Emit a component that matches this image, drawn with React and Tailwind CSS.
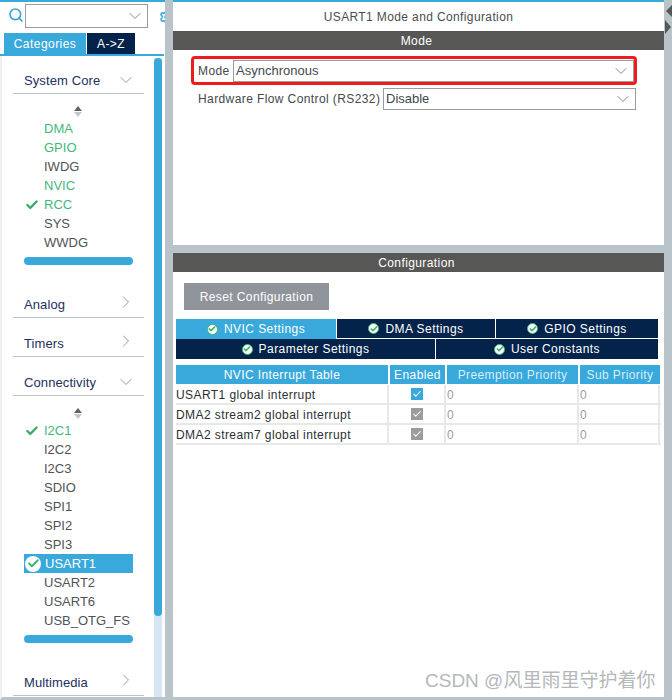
import { ChevronDown, ChevronRight, Check, Search, Settings } from "lucide-react";

const font = { fontFamily: '"Liberation Sans", Arial, sans-serif' };

const Chevron = ({ open }) =>
  open ? (
    <ChevronDown className="w-[20px] h-[20px] -mt-[1px] text-[#7d8589] shrink-0" strokeWidth={1} />
  ) : (
    <ChevronRight className="w-[20px] h-[20px] -mt-[3px] text-[#7d8589] shrink-0" strokeWidth={1} />
  );

const Section = ({ title, open, className }) => (
  <div className={`mx-[13px] w-[131px] h-[23px] border-b border-[#b9c4ca] flex items-start justify-between pr-[8px] ${className}`}>
    <span className="pl-[11px] text-[13px] leading-[20px] tracking-[0.1px] text-[#232f5e]">{title}</span>
    <Chevron open={open} />
  </div>
);

const SortArrows = ({ className }) => (
  <div className={`w-[8px] ml-[74px] flex flex-col items-center gap-[1px] ${className}`}>
    <div className="w-0 h-0 border-x-[4px] border-x-transparent border-b-[5px] border-b-[#5c6468]" />
    <div className="w-0 h-0 border-x-[4px] border-x-transparent border-t-[5px] border-t-[#c3c7c9]" />
  </div>
);

const Peripheral = ({ name, active, checked, selected }) => {
  if (selected) {
    return (
      <div className="ml-[24px] w-[109px] h-[19px] bg-[#39a9dc] flex items-center pl-[1px]">
        <span className="w-[16px] h-[16px] rounded-full bg-white flex items-center justify-center shrink-0">
          <Check className="w-[13px] h-[13px] text-[#3cb371]" strokeWidth={3.5} />
        </span>
        <span className="ml-[4px] text-[13px] leading-[19px] text-white">{name}</span>
      </div>
    );
  }
  return (
    <div className="h-[19px] flex items-center pl-[25px]">
      <span className="w-[19px] flex items-center">
        {checked && <Check className="w-[14px] h-[14px] text-[#3cab6b]" strokeWidth={4} />}
      </span>
      <span className={`text-[13px] leading-[19px] ${active ? "text-[#3fb87c]" : "text-[#4f5357]"}`}>{name}</span>
    </div>
  );
};

const HBar = ({ className }) => <div className={`ml-[24px] w-[109px] h-[8px] rounded-full bg-[#39a9dc] ${className}`} />;

const SubTab = ({ label, active, className }) => (
  <div className={`h-[20px] flex items-center justify-center gap-[6px] text-[12px] tracking-[0.45px] text-white ${active ? "bg-[#39a9dc]" : "bg-[#03234b]"} ${className}`}>
    <span className="w-[11px] h-[11px] rounded-full bg-white border-[1px] border-[#3cb371] flex items-center justify-center">
      <Check className="w-[8px] h-[8px] text-[#3cb371]" strokeWidth={5} />
    </span>
    <span className="leading-[20px]">{label}</span>
  </div>
);

const Row = ({ name, on }) => (
  <div className="flex h-[20px] border-b-2 border-[#e6e8ea] text-[12px] leading-[20px]">
    <div className="w-[213px] border-r-2 border-[#e6e8ea] tracking-[0.42px] text-[#2c2f33] whitespace-nowrap">{name}</div>
    <div className="w-[57px] border-r-2 border-[#e6e8ea] flex items-center justify-center">
      <span className={`w-[12px] h-[12px] flex items-center justify-center ${on ? "bg-[#39a9dc]" : "bg-[#9a9da0]"}`}>
        <Check className="w-[10px] h-[10px] text-white" strokeWidth={2.5} />
      </span>
    </div>
    <div className="w-[133px] border-r-2 border-[#e6e8ea] pl-[1px] text-[#9a9da0]">0</div>
    <div className="w-[81px] border-r-2 border-[#e6e8ea] pl-[1px] text-[#9a9da0]">0</div>
  </div>
);

const Select = ({ value, className }) => (
  <div className={`h-[22px] border border-[#9a9da0] flex items-center justify-between pl-[2px] pr-[2px] text-[#44484c] bg-white ${className}`}>
    <span className="leading-[20px] text-[13px]">{value}</span>
    <ChevronDown className="w-[20px] h-[20px] text-[#6f7679]" strokeWidth={1} />
  </div>
);

export default function App() {
  return (
    <div className="relative w-[672px] h-[700px] overflow-hidden bg-[#b9c4ca] flex" style={font}>
      <aside className="w-[165px] h-[700px] bg-white shrink-0 flex flex-col overflow-hidden border-t-2 border-[#39a9dc]">
        <div className="h-[31px] shrink-0 flex items-start pt-[2px] pl-[8px]">
          <Search className="w-[16px] h-[16px] mt-[3px] text-[#39a9dc] shrink-0" strokeWidth={2.5} />
          <div className="ml-[1px] w-[123px] h-[24px] border border-[#9a9da0] flex items-center justify-end pr-[2px] shrink-0">
            <ChevronDown className="w-[20px] h-[20px] text-[#6f7679]" strokeWidth={1} />
          </div>
          <Settings className="ml-[11px] mt-[5px] w-[16px] h-[16px] text-[#39a9dc] shrink-0" strokeWidth={2.2} />
        </div>
        <div className="h-[21px] shrink-0 flex pl-[4px] text-[12px] tracking-[0.45px] text-white">
          <div className="w-[82px] bg-[#39a9dc] flex items-center justify-center">Categories</div>
          <div className="ml-[1px] w-[48px] bg-[#03234b] flex items-center justify-center">A-&gt;Z</div>
        </div>
        <div className="h-[2px] shrink-0 bg-[#39a9dc] mr-[1px]" />
        <div className="flex-1 flex min-h-0 border-l-2 border-[#eef0f1] border-b-[3px] border-b-[#b9c4ca]">
          <div className="w-[152px] pt-[15px] -ml-[2px] pl-0">
            <Section title="System Core" open />
            <SortArrows className="mt-[12px]" />
            <div className="mt-[2px]">
              <Peripheral name="DMA" active />
              <Peripheral name="GPIO" active />
              <Peripheral name="IWDG" />
              <Peripheral name="NVIC" active />
              <Peripheral name="RCC" active checked />
              <Peripheral name="SYS" />
              <Peripheral name="WWDG" />
            </div>
            <HBar className="mt-[5px]" />
            <Section title="Analog" className="mt-[30px]" />
            <Section title="Timers" className="mt-[16px]" />
            <Section title="Connectivity" open className="mt-[16px]" />
            <SortArrows className="mt-[12px]" />
            <div className="mt-[2px]">
              <Peripheral name="I2C1" active checked />
              <Peripheral name="I2C2" />
              <Peripheral name="I2C3" />
              <Peripheral name="SDIO" />
              <Peripheral name="SPI1" />
              <Peripheral name="SPI2" />
              <Peripheral name="SPI3" />
              <Peripheral name="USART1" selected />
              <Peripheral name="USART2" />
              <Peripheral name="USART6" />
              <Peripheral name="USB_OTG_FS" />
            </div>
            <HBar className="mt-[5px]" />
            <Section title="Multimedia" className="mt-[30px]" />
          </div>
          <div className="w-[8px] mt-[2px] ml-[2px] bg-[#d6e6f4]">
            <div className="w-[8px] h-[558px] rounded-t-full rounded-b-full bg-[#39a9dc]" />
          </div>
        </div>
      </aside>

      <main className="ml-[8px] w-[491px] h-[700px] flex flex-col border-t-2 border-[#39a9dc]">
        <div className="h-[243px] bg-white flex flex-col">
          <div className="h-[29px] flex items-center justify-center text-[12px] tracking-[0.38px] text-[#4a4e52]">USART1 Mode and Configuration</div>
          <div className="h-[19px] bg-[#575856] flex items-center justify-center pr-[4px] text-[12px] tracking-[0.4px] text-white">Mode</div>
          <div className="mt-[6px] ml-[18px] w-[446px] h-[29px] border-[3px] border-[#ee1c1c] rounded-[4px] flex items-center pl-[4px]">
            <span className="w-[35px] shrink-0 text-[12px] tracking-[0.4px] text-[#44484c]">Mode</span>
            <Select value="Asynchronous" className="w-[401px]" />
          </div>
          <div className="mt-[3px] ml-[25px] flex items-center">
            <span className="w-[185px] shrink-0 text-[12px] tracking-[0.4px] text-[#44484c] whitespace-nowrap">Hardware Flow Control (RS232)</span>
            <Select value="Disable" className="w-[253px]" />
          </div>
        </div>
        <div className="mt-[8px] flex-1 bg-white flex flex-col border-b-[3px] border-[#b9c4ca]">
          <div className="h-[19px] bg-[#575856] flex items-center justify-center pr-[4px] text-[12px] tracking-[0.4px] text-white">Configuration</div>
          <div className="mt-[11px] ml-[11px] w-[145px] h-[27px] bg-[#8f959b] flex items-center justify-center text-[12px] tracking-[0.4px] text-white">Reset Configuration</div>
          <div className="mt-[9px] ml-[3px] w-[482px]">
            <div className="flex">
              <SubTab label="NVIC Settings" active className="w-[160px]" />
              <SubTab label="DMA Settings" className="w-[159px] border-l border-b border-white" />
              <SubTab label="GPIO Settings" className="w-[163px] border-l border-b border-white" />
            </div>
            <div className="flex">
              <SubTab label="Parameter Settings" className="w-[259px]" />
              <SubTab label="User Constants" className="w-[223px] border-l border-white" />
            </div>
          </div>
          <div className="mt-[6px] ml-[3px] w-[485px]">
            <div className="flex h-[19px] text-[12px] tracking-[0.4px] text-white mb-[1px]">
              <div className="w-[212px] mr-[2px] bg-[#39a9dc] flex items-center justify-center">NVIC Interrupt Table</div>
              <div className="w-[55px] mr-[2px] bg-[#39a9dc] flex items-center justify-center">Enabled</div>
              <div className="w-[131px] mr-[2px] bg-[#39a9dc] flex items-center justify-center text-[#d8eef8]">Preemption Priority</div>
              <div className="w-[80px] bg-[#39a9dc] flex items-center justify-center text-[#d8eef8]">Sub Priority</div>
            </div>
            <Row name="USART1 global interrupt" on />
            <Row name="DMA2 stream2 global interrupt" />
            <Row name="DMA2 stream7 global interrupt" />
          </div>
        </div>
      </main>

      <div className="pt-[5px] flex flex-col items-start gap-[3px]">
        <div className="ml-[2px] w-0 h-0 border-y-[6px] border-y-transparent border-r-[6px] border-r-[#575856]" />
        <div className="ml-[1px] w-0 h-0 border-y-[7px] border-y-transparent border-l-[6px] border-l-[#575856]" />
      </div>

      <div
        className="absolute left-[425px] top-[669px] text-[19px] leading-[24px] text-[#b4b8ba] whitespace-nowrap"
        style={{ fontFamily: '"Liberation Sans", "Noto Sans CJK SC", sans-serif' }}
      >
        CSDN @风里雨里守护着你
      </div>
    </div>
  );
}
